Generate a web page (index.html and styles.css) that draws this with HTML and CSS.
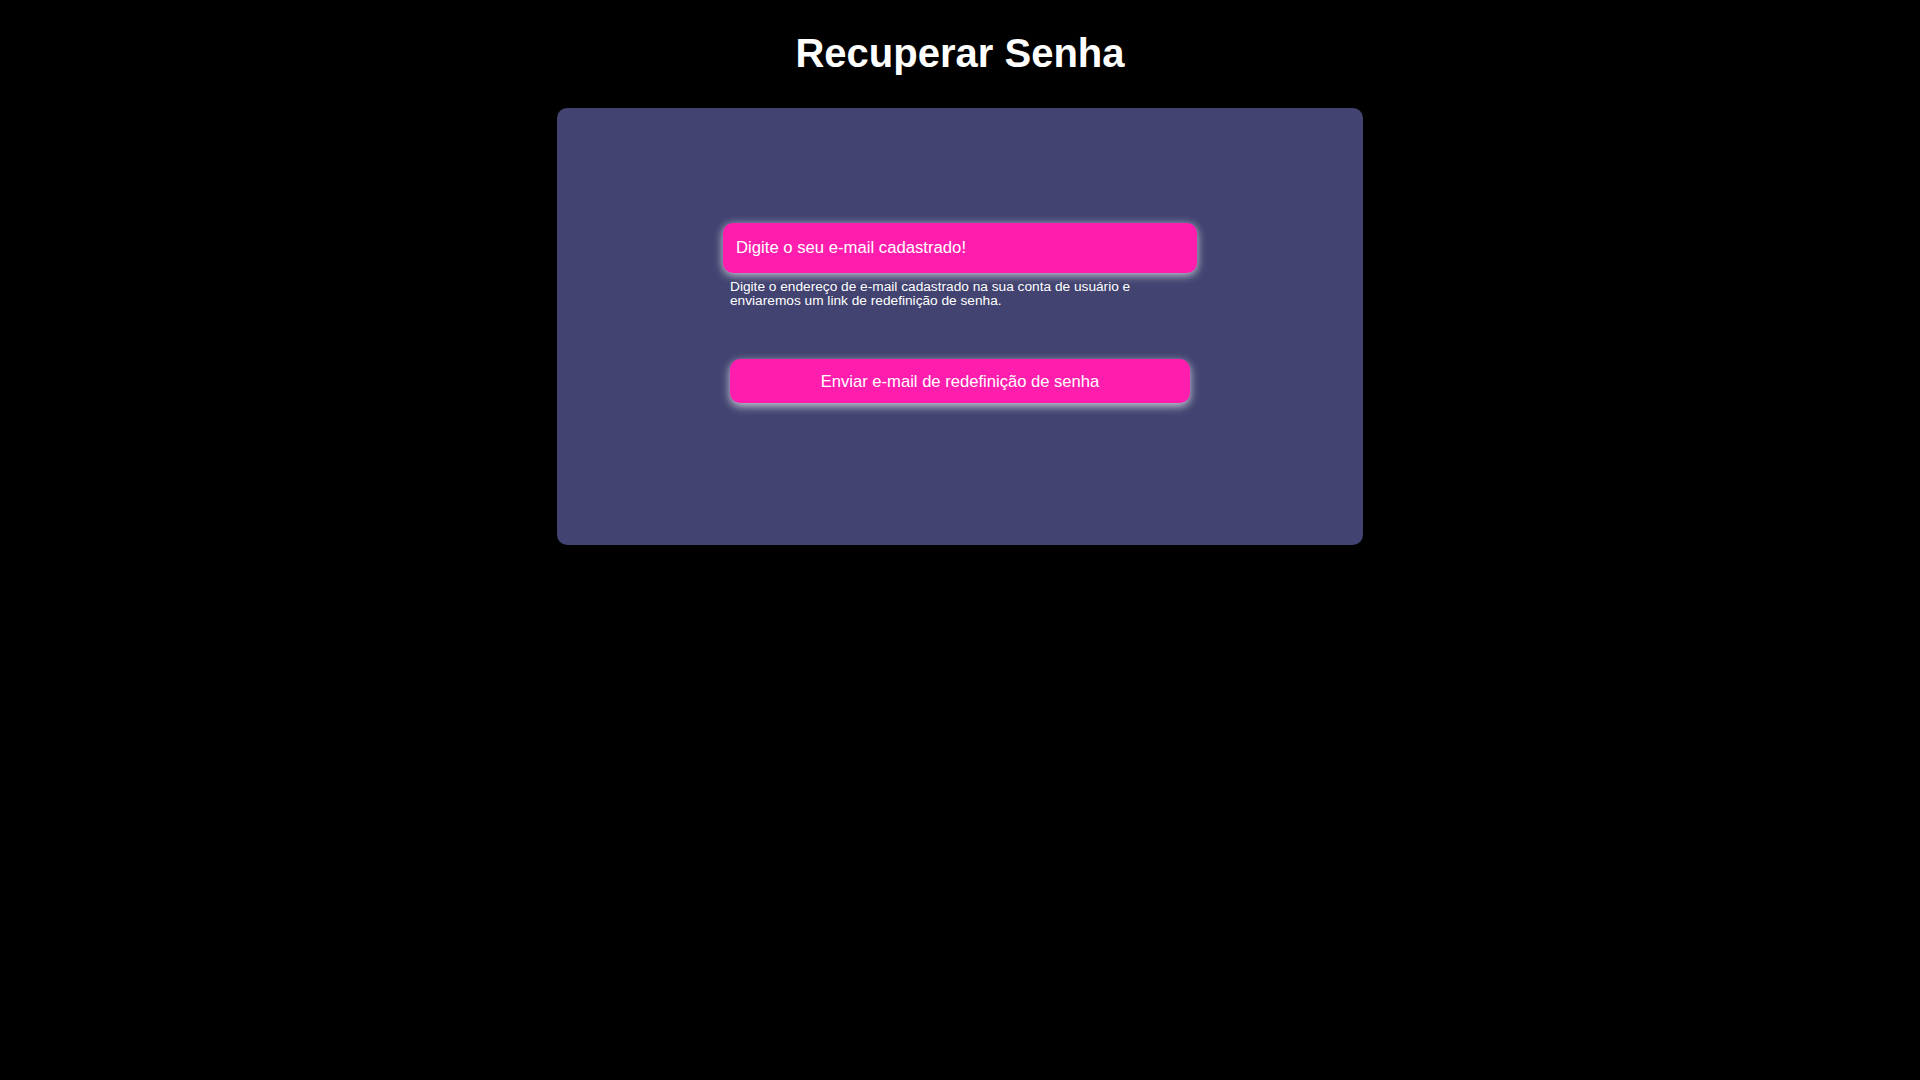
FILE: index.html
```html
<!DOCTYPE html>
<html lang="pt-BR">
<head>
<meta charset="utf-8">
<title>Recuperar Senha</title>
<link rel="stylesheet" href="styles.css">
</head>
<body>
<h1 class="title">Recuperar Senha</h1>
<main class="card">
  <form class="form">
    <input class="email" type="email" placeholder="Digite o seu e-mail cadastrado!">
    <p class="hint">Digite o endereço de e-mail cadastrado na sua conta de usuário e enviaremos um link de redefinição de senha.</p>
    <button class="send" type="button">Enviar e-mail de redefinição de senha</button>
  </form>
</main>
</body>
</html>
```
FILE: styles.css
```css
html, body {
  margin: 0;
  padding: 0;
  background: #000;
}
body {
  font-family: "Liberation Sans", Arial, sans-serif;
  color: #fff;
}
.title {
  margin: 0;
  padding: 30px 0 32px;
  font-size: 40px;
  line-height: 46px;
  font-weight: bold;
  text-align: center;
  color: #fff;
}
.card {
  box-sizing: border-box;
  width: 806px;
  height: 437px;
  margin: 0 auto;
  padding-top: 115px;
  background: #424370;
  border-radius: 10px;
}
.form {
  width: 474px;
  margin: 0 auto;
  display: flex;
  flex-direction: column;
  align-items: center;
}
.email {
  box-sizing: border-box;
  width: 474px;
  height: 50px;
  padding: 0 13px;
  border: none;
  outline: none;
  border-radius: 10px;
  background: #ff1dae;
  color: #fff;
  font-family: "Liberation Sans", Arial, sans-serif;
  font-size: 16.7px;
  box-shadow: 0 2px 10px rgba(255, 255, 255, 0.75);
}
.email::placeholder {
  color: #fff;
  opacity: 1;
}
.hint {
  align-self: stretch;
  margin: 6.5px 0 0;
  padding: 0 7px;
  font-size: 13.7px;
  line-height: 14px;
  color: #fff;
}
.send {
  width: 460px;
  height: 44px;
  margin-top: 51px;
  padding: 2px 0 0;
  border: none;
  border-radius: 10px;
  background: #ff1dae;
  color: #fff;
  font-family: "Liberation Sans", Arial, sans-serif;
  font-size: 16.6px;
  cursor: pointer;
  box-shadow: 0 3px 10px rgba(255, 255, 255, 0.75);
}
```
